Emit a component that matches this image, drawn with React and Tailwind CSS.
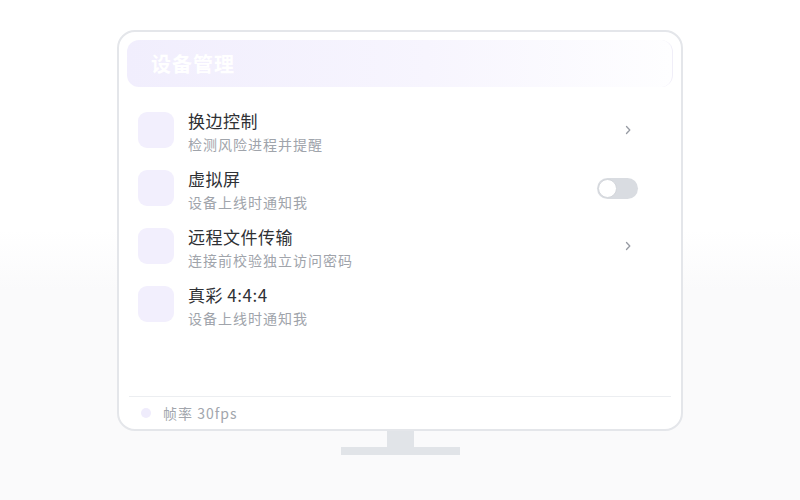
import React from 'react';

const rows = [
  { title: '换边控制', desc: '检测风险进程并提醒', action: 'chevron' },
  { title: '虚拟屏', desc: '设备上线时通知我', action: 'toggle' },
  { title: '远程文件传输', desc: '连接前校验独立访问密码', action: 'chevron' },
  { title: '真彩 4:4:4', desc: '设备上线时通知我', action: null },
];

function Chevron() {
  return (
    <svg width="8" height="10" viewBox="0 0 8 10" className="mr-[6px]">
      <path d="M2.5 1.5 L5.8 5 L2.5 8.5" fill="none" stroke="#979ba3" strokeWidth="1.3" strokeLinecap="round" strokeLinejoin="round" />
    </svg>
  );
}

function Toggle() {
  return (
    <div className="w-[41px] h-[21px] rounded-full bg-[#d9dce1] flex items-center px-[1px]">
      <div className="w-[19px] h-[19px] rounded-full bg-white border border-[#d3d6db]" />
    </div>
  );
}

export default function App() {
  return (
    <div
      className="w-[800px] h-[500px] flex flex-col items-center pt-[30px] bg-[linear-gradient(to_bottom,#ffffff_46%,#fafafb_58%)]"
      style={{ fontFamily: '"Noto Sans CJK SC", "Noto Sans", sans-serif' }}
    >
      {/* screen */}
      <div className="w-[566px] h-[401px] rounded-[18px] border-2 border-[#e4e6ea] bg-white flex flex-col">
        <div className="mx-[8px] mt-[8px] h-[47px] rounded-[12px] border-r border-[#f0eef8] bg-[linear-gradient(to_right,#f1eefd,#f7f5fe_55%,#fefeff)] flex items-center pl-[24px]">
          <span className="text-white text-[20px] font-bold tracking-[1px]">设备管理</span>
        </div>

        <div className="flex-1 flex flex-col pt-[24px] pl-[19px] pr-[43px] gap-[16px]">
          {rows.map((r) => (
            <div key={r.title} className="flex items-start">
              <div className="w-[36px] h-[36px] mt-px rounded-[9px] bg-[#f2effd] shrink-0" />
              <div className="ml-[14px] flex-1 flex flex-col">
                <span className="text-[17px] leading-[20px] tracking-[0.5px] text-[#2f3135]">{r.title}</span>
                <span className="mt-[4px] text-[14px] leading-[18px] tracking-[1px] text-[#a0a4ab]">{r.desc}</span>
              </div>
              <div className="h-[38px] flex items-center">
                {r.action === 'chevron' && <Chevron />}
                {r.action === 'toggle' && <Toggle />}
              </div>
            </div>
          ))}
        </div>

        <div className="mx-[10px] border-t border-[#eceef1] h-[33px] flex items-center pl-[12px]">
          <div className="w-[10px] h-[10px] rounded-full bg-[#efecfc]" />
          <span className="ml-[12px] text-[14px] tracking-[1px] text-[#a2a6ad]">帧率 30fps</span>
        </div>
      </div>

      {/* stand */}
      <div className="w-[27px] h-[16px] bg-[#e1e4e8]" />
      <div className="w-[119px] h-[8px] bg-[#e1e4e8]" />
    </div>
  );
}
